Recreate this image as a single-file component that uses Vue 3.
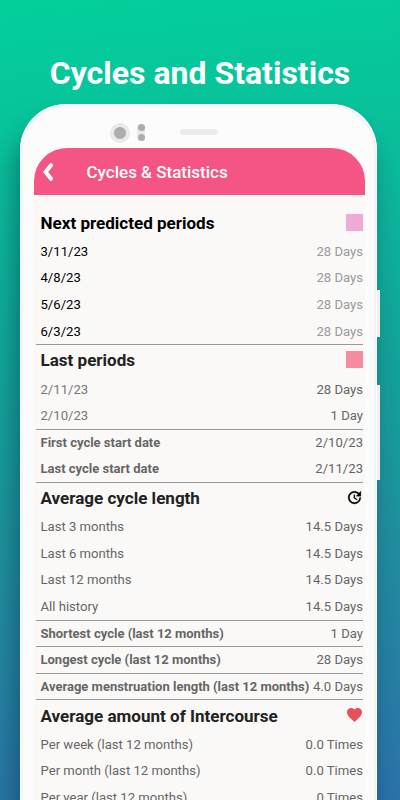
<template>
  <div class="promo">
    <h1 class="title">Cycles and Statistics</h1>

    <div class="phone">
      <span class="side-button power"></span>
      <span class="side-button volume"></span>

      <div class="sensors">
        <span class="camera"></span>
        <span class="dots"><i></i><i></i></span>
        <span class="speaker"></span>
      </div>

      <div class="screen">
        <header class="toolbar">
          <svg class="back" viewBox="0 0 12 20">
            <path d="M9 3.2 L3.6 10 L9 16.8" fill="none" stroke="#fff" stroke-width="4" stroke-linecap="round" stroke-linejoin="miter" />
          </svg>
          <span class="toolbar-title">Cycles &amp; Statistics</span>
        </header>

        <main class="content">
          <section v-for="(section, i) in sections" :key="i" class="section" :class="section.tone">
            <div v-if="section.title" class="heading">
              <h2>{{ section.title }}</h2>
              <span v-if="section.icon === 'predicted'" class="square predicted"></span>
              <span v-else-if="section.icon === 'period'" class="square period"></span>
              <svg v-else-if="section.icon === 'history'" class="history" viewBox="0 0 24 24">
                <path d="M21 10.12h-6.78l2.74-2.82c-2.73-2.7-7.15-2.8-9.88-.1-2.73 2.71-2.73 7.08 0 9.79s7.15 2.71 9.88 0C18.32 15.65 19 14.08 19 12.1h2c0 1.98-.88 4.55-2.64 6.29-3.51 3.48-9.21 3.48-12.72 0-3.5-3.47-3.53-9.11-.02-12.58s9.14-3.47 12.65 0L21 3v7.12zM12.5 8v4.25l3.5 2.08-.72 1.21L11 13V8h1.5z" />
              </svg>
              <svg v-else class="heart" viewBox="2 3 20 18.35" preserveAspectRatio="none">
                <path d="M12 21.35l-1.45-1.32C5.4 15.36 2 12.28 2 8.5 2 5.42 4.42 3 7.5 3c1.74 0 3.41.81 4.5 2.09C13.09 3.81 14.76 3 16.5 3 19.58 3 22 5.42 22 8.5c0 3.78-3.4 6.86-8.55 11.54L12 21.35z" />
              </svg>
            </div>
            <div v-for="(row, j) in section.rows" :key="j" class="row">
              <span class="label" :class="{ strong: !section.title }">{{ row[0] }}</span>
              <span class="value">{{ row[1] }}</span>
            </div>
          </section>
        </main>
      </div>
    </div>
  </div>
</template>

<script setup>
const sections = [
  {
    title: 'Next predicted periods',
    icon: 'predicted',
    tone: 'upcoming',
    rows: [
      ['3/11/23', '28 Days'],
      ['4/8/23', '28 Days'],
      ['5/6/23', '28 Days'],
      ['6/3/23', '28 Days']
    ]
  },
  {
    title: 'Last periods',
    icon: 'period',
    tone: 'past',
    rows: [
      ['2/11/23', '28 Days'],
      ['2/10/23', '1 Day']
    ]
  },
  {
    rows: [
      ['First cycle start date', '2/10/23'],
      ['Last cycle start date', '2/11/23']
    ]
  },
  {
    title: 'Average cycle length',
    icon: 'history',
    rows: [
      ['Last 3 months', '14.5 Days'],
      ['Last 6 months', '14.5 Days'],
      ['Last 12 months', '14.5 Days'],
      ['All history', '14.5 Days']
    ]
  },
  { rows: [['Shortest cycle (last 12 months)', '1 Day']] },
  { rows: [['Longest cycle (last 12 months)', '28 Days']] },
  { rows: [['Average menstruation length (last 12 months)', '4.0 Days']] },
  {
    title: 'Average amount of Intercourse',
    icon: 'heart',
    rows: [
      ['Per week (last 12 months)', '0.0 Times'],
      ['Per month (last 12 months)', '0.0 Times'],
      ['Per year (last 12 months)', '0 Times']
    ]
  }
]
</script>

<style>
body {
  margin: 0;
  overflow: hidden;
}
</style>

<style scoped>
.promo {
  box-sizing: border-box;
  width: 400px;
  height: 800px;
  overflow: hidden;
  font-family: Roboto, "Liberation Sans", sans-serif;
  background: linear-gradient(174deg, #03d09b 0%, #0abd9b 22%, #14a29b 48%, #218f9f 68%, #2b72aa 100%);
}

.title {
  margin: 0;
  height: 104px;
  padding-top: 54px;
  box-sizing: border-box;
  text-align: center;
  color: #fff;
  font-size: 32px;
  font-weight: 700;
  line-height: 38px;
}

.phone {
  position: relative;
  box-sizing: border-box;
  width: 357px;
  height: 760px;
  margin-left: 20px;
  padding: 0 12px 0 14px;
  border-radius: 46px 46px 0 0;
  background: #fcfcfc;
  box-shadow: inset 0 0 0 1px #fff, inset 0 0 5px rgba(0, 0, 0, 0.14), -5px 22px 24px rgba(0, 30, 50, 0.4);
}

.side-button {
  position: absolute;
  left: 357px;
  width: 3px;
  background: #f0f0f0;
}

.power {
  top: 186px;
  height: 47px;
}

.volume {
  top: 281px;
  height: 95px;
}

.sensors {
  display: flex;
  align-items: center;
  height: 44px;
  padding: 0 0 0 76px;
}

.camera {
  box-sizing: border-box;
  width: 20px;
  height: 20px;
  margin: 13px 0 0 -0.5px;
  border: 4.5px solid #e9e9e9;
  border-radius: 50%;
  background: #acacac;
}

.dots {
  display: flex;
  flex-direction: column;
  gap: 3.5px;
  width: 8px;
  margin: 13px 0 0 7.5px;
  border-radius: 4px;
  background: #e9e9e9;
}

.dots i {
  width: 7px;
  height: 7px;
  margin-left: 0.5px;
  border-radius: 50%;
  background: #acacac;
}

.speaker {
  width: 38px;
  height: 6px;
  margin: 12px 0 0 35px;
  border-radius: 3px;
  background: #ececec;
}

.screen {
  height: 716px;
  overflow: hidden;
  border-radius: 33px 33px 0 0;
  background: #faf9f8;
}

.toolbar {
  display: flex;
  align-items: center;
  box-sizing: border-box;
  height: 47.4px;
  padding: 1px 0 0 8px;
  background: #f45585;
}

.back {
  width: 12px;
  height: 20px;
}

.toolbar-title {
  margin-left: 32.5px;
  color: #fff;
  font-size: 17px;
  font-weight: 500;
}

.content {
  padding: 11.2px 2px 0;
}

.section {
  box-sizing: border-box;
  color: #666;
}

.section + .section {
  box-shadow: inset 0 1px 0 #999;
}

.heading {
  display: flex;
  align-items: center;
  justify-content: space-between;
  height: 31.3px;
  padding-left: 4.5px;
}

.heading h2 {
  margin: 0;
  padding-top: 1px;
  color: #222;
  font-size: 17.05px;
  font-weight: 700;
  line-height: 20px;
}

.upcoming .heading h2,
.upcoming .label {
  color: #000;
}

.upcoming .value {
  color: #999;
}

.past .label {
  color: #777;
}

.square {
  width: 17px;
  height: 17px;
}

.predicted {
  background: #efabd8;
}

.period {
  background: #f78ba1;
}

.history {
  width: 17px;
  height: 17px;
  stroke: #000;
  stroke-width: 0.4;
}

.heart {
  width: 15px;
  height: 14px;
  margin-right: 1px;
  fill: #e94f5b;
}

.row {
  display: flex;
  align-items: center;
  justify-content: space-between;
  box-sizing: border-box;
  height: 26.6px;
  padding: 1.4px 0 0 4.5px;
  font-size: 13.12px;
  line-height: 16px;
  white-space: nowrap;
}

.strong {
  font-size: 13px;
  font-weight: 700;
}
</style>
